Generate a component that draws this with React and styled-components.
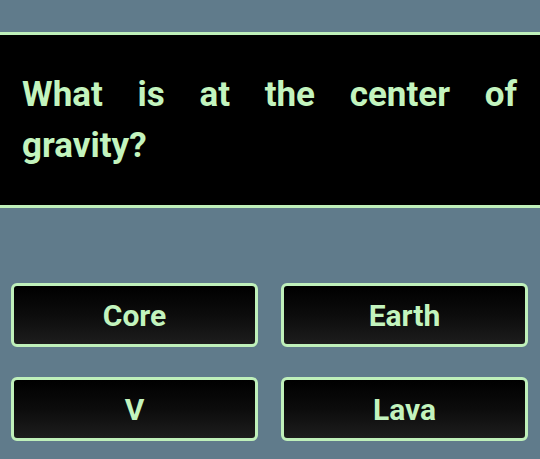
import styled, { createGlobalStyle } from "styled-components";

const GlobalStyle = createGlobalStyle`
  html, body {
    margin: 0;
    padding: 0;
    height: 100%;
    background: #607b8b;
  }
  #root {
    min-height: 100%;
  }
`;

const QuizScreen = styled.main`
  box-sizing: border-box;
  min-height: 459px;
  padding-top: 32px;
  font-family: Roboto, "Liberation Sans", sans-serif;
  background: #607b8b;
`;

const QuestionPanel = styled.section`
  box-sizing: border-box;
  width: 100%;
  background: #000;
  border-top: 3px solid #bff0ba;
  border-bottom: 3px solid #bff0ba;
  padding: 34px 23px 34px 22px;
`;

const QuestionText = styled.h1`
  margin: 0;
  font-size: 35px;
  line-height: 51px;
  font-weight: 700;
  color: #c3f4be;
  text-align: justify;
`;

const AnswerGrid = styled.div`
  display: grid;
  grid-template-columns: 1fr 1fr;
  column-gap: 23px;
  row-gap: 30px;
  padding: 75px 12px 0 11px;
`;

const AnswerButton = styled.button`
  box-sizing: border-box;
  height: 64px;
  border: 3px solid #bff0ba;
  border-radius: 6px;
  background: linear-gradient(to bottom, #000 0%, #0c0c0c 50%, #1d1d1d 100%);
  color: #c3f4be;
  font-family: Roboto, "Liberation Sans", sans-serif;
  font-size: 30px;
  font-weight: 700;
  cursor: pointer;
  padding: 0;
`;

const answers = ["Core", "Earth", "V", "Lava"];

export default function App() {
  return (
    <>
      <GlobalStyle />
      <QuizScreen>
        <QuestionPanel>
          <QuestionText>What is at the center of gravity?</QuestionText>
        </QuestionPanel>
        <AnswerGrid>
          {answers.map((a) => (
            <AnswerButton key={a}>{a}</AnswerButton>
          ))}
        </AnswerGrid>
      </QuizScreen>
    </>
  );
}
